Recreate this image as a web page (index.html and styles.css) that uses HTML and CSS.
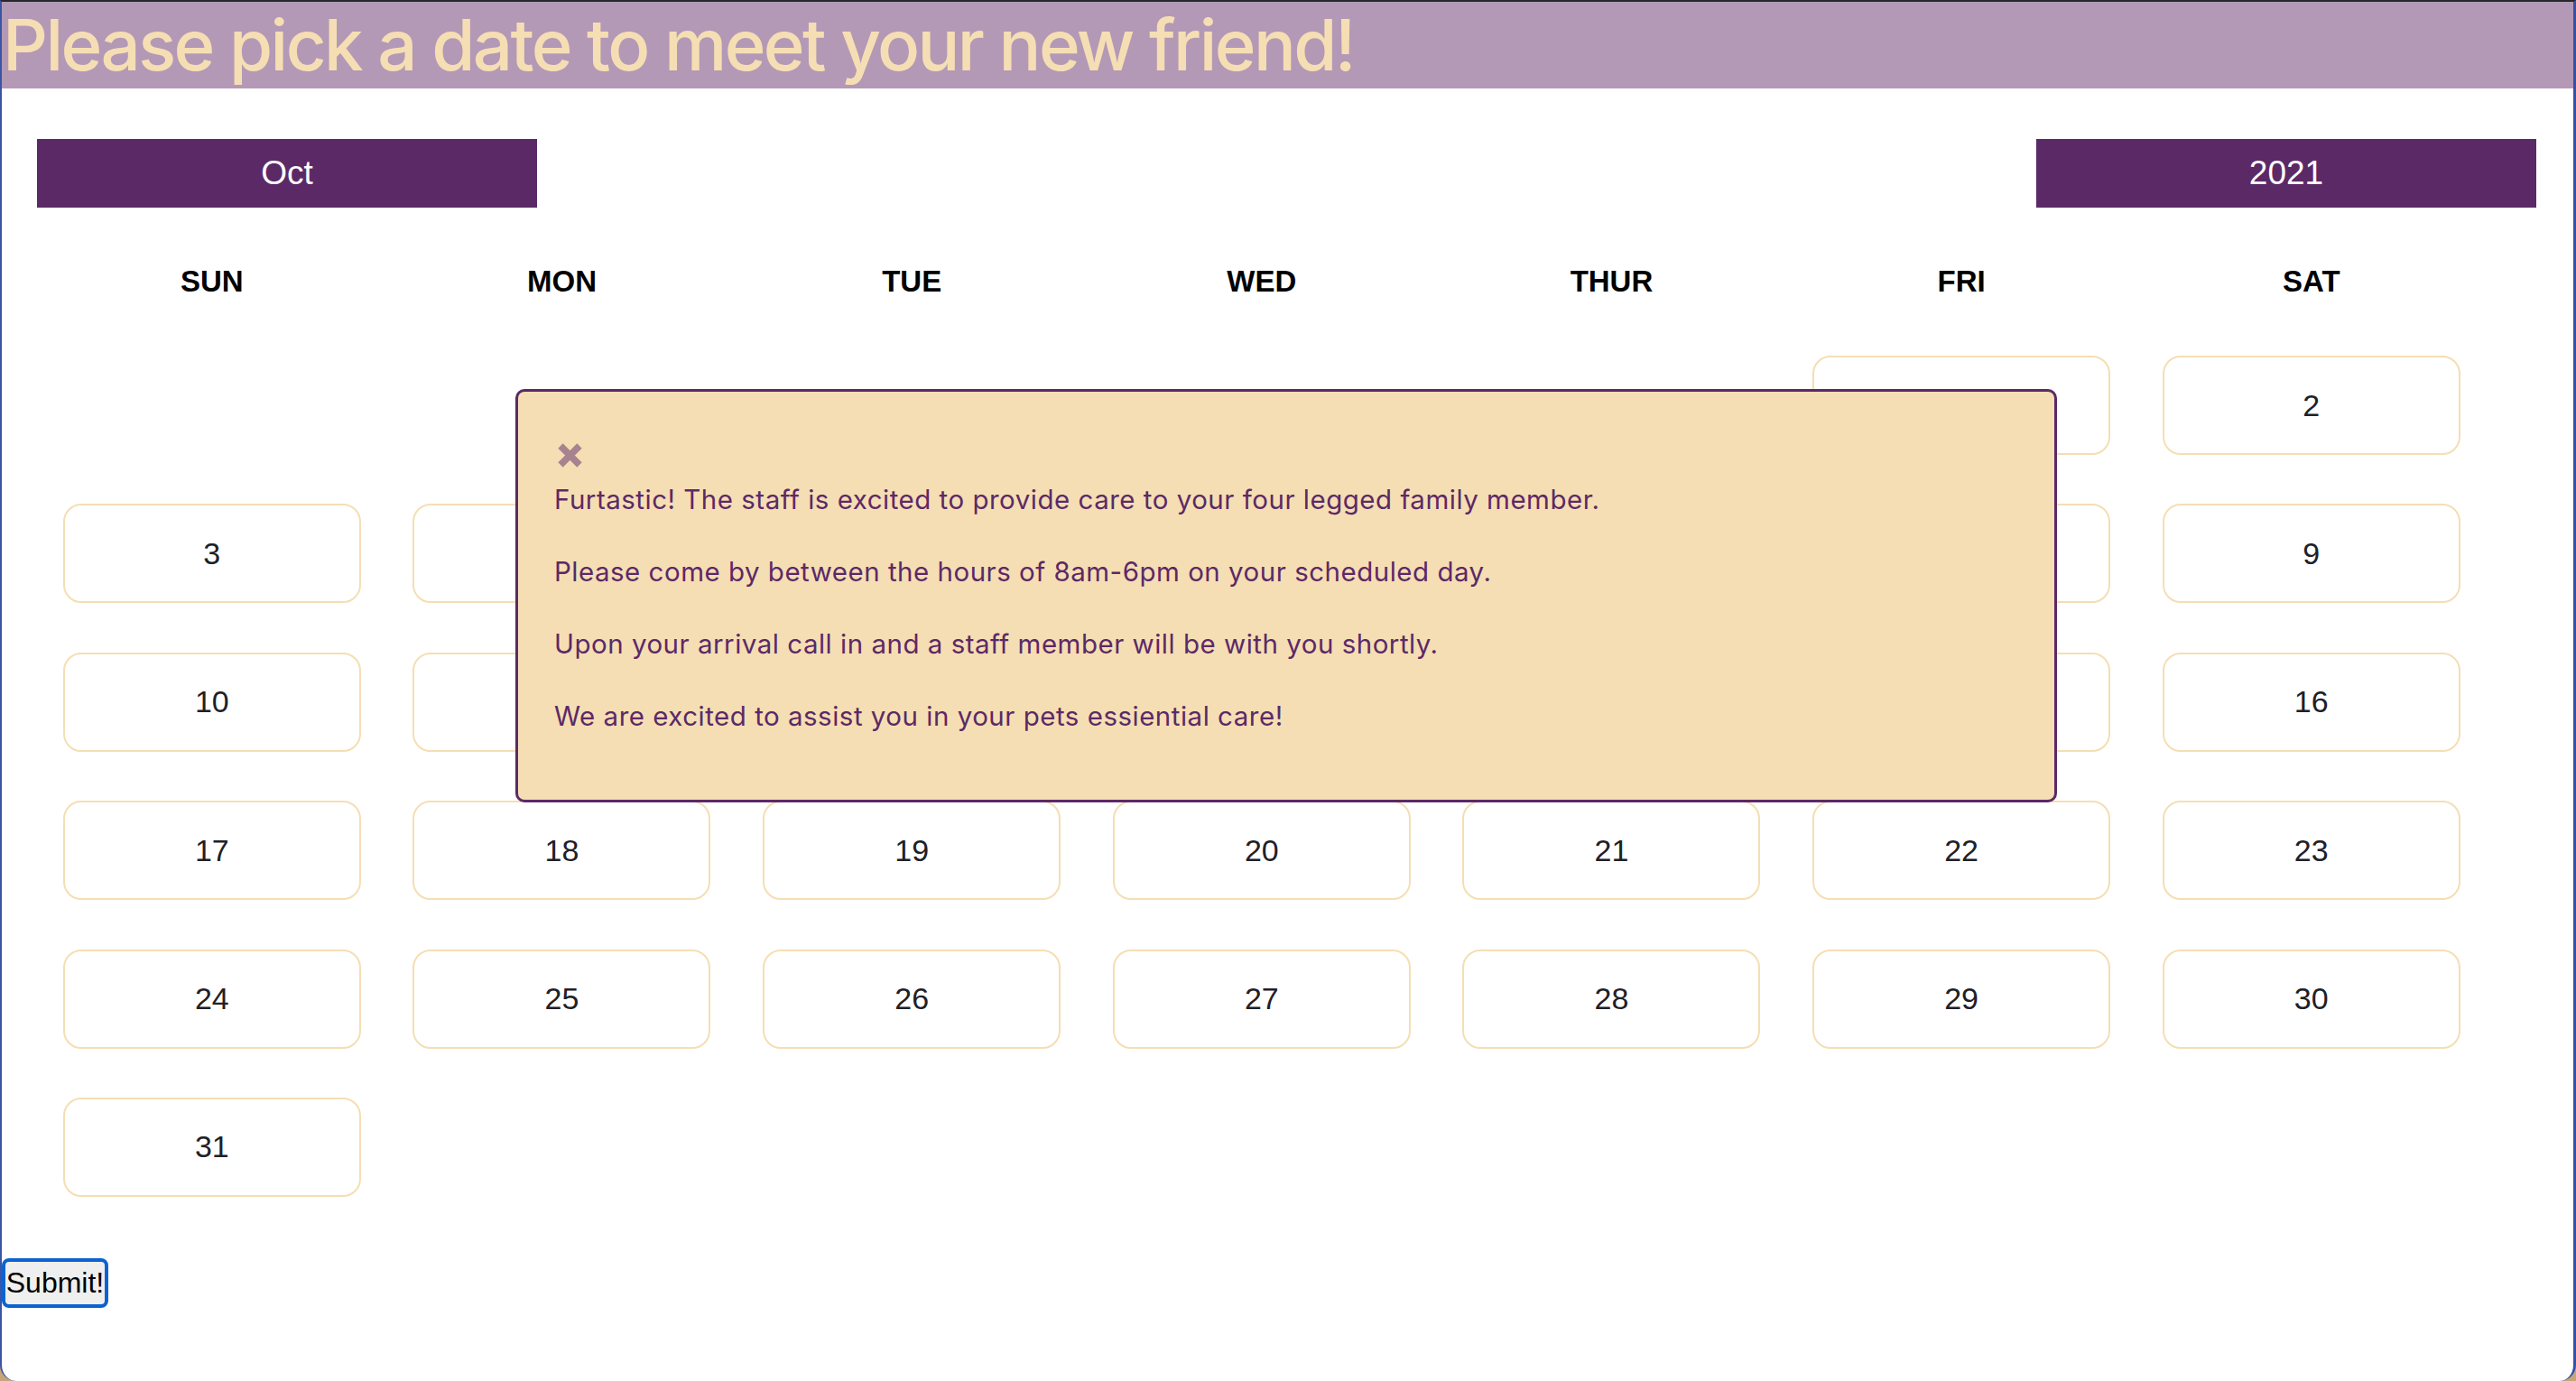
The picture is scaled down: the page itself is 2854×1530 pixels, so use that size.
FILE: index.html
```html
<!DOCTYPE html>
<html lang="en">
<head>
<meta charset="utf-8">
<title>Pick a date</title>
<link rel="stylesheet" href="styles.css">
</head>
<body>
<h1 class="title">Please pick a date to meet your new friend!</h1>
<div class="selectors">
  <div class="selector">Oct</div>
  <div class="selector">2021</div>
</div>
<div class="weekdays">
  <div>SUN</div><div>MON</div><div>TUE</div><div>WED</div><div>THUR</div><div>FRI</div><div>SAT</div>
</div>
<div class="days">
  <div class="blank"></div><div class="blank"></div><div class="blank"></div><div class="blank"></div><div class="blank"></div>
  <div class="day">1</div><div class="day">2</div>
  <div class="day">3</div><div class="day">4</div><div class="day">5</div><div class="day">6</div><div class="day">7</div><div class="day">8</div><div class="day">9</div>
  <div class="day">10</div><div class="day">11</div><div class="day">12</div><div class="day">13</div><div class="day">14</div><div class="day">15</div><div class="day">16</div>
  <div class="day">17</div><div class="day">18</div><div class="day">19</div><div class="day">20</div><div class="day">21</div><div class="day">22</div><div class="day">23</div>
  <div class="day">24</div><div class="day">25</div><div class="day">26</div><div class="day">27</div><div class="day">28</div><div class="day">29</div><div class="day">30</div>
  <div class="day">31</div>
</div>
<button class="submit" type="button">Submit!</button>

<div class="modal">
  <svg class="close" width="29" height="29" viewBox="0 0 29 29" aria-hidden="true">
    <path d="M4 4 L25 25 M25 4 L4 25" stroke="#a7828f" stroke-width="7.5" stroke-linecap="butt"/>
  </svg>
  <p>Furtastic! The staff is excited to provide care to your four legged family member.</p>
  <p>Please come by between the hours of 8am-6pm on your scheduled day.</p>
  <p>Upon your arrival call in and a staff member will be with you shortly.</p>
  <p>We are excited to assist you in your pets essiential care!</p>
</div>
</body>
</html>
```

FILE: styles.css
```css
html {
  margin: 0;
  height: 100%;
  background: #c6a678;
}

body {
  margin: 0;
  box-sizing: border-box;
  min-height: 1530px;
  background: #ffffff;
  border-top: 2px solid #27262b;
  border-left: 2px solid #3a55a5;
  border-right: 3px solid #3450a8;
  border-radius: 0 0 18px 18px;
  position: relative;
  font-family: "Liberation Sans", Arial, sans-serif;
}

.title {
  margin: 0;
  height: 96px;
  background: #b399b6;
  color: #f5deb3;
  font-family: Inter, "Noto Sans", sans-serif;
  font-size: 78px;
  font-weight: 500;
  line-height: 96px;
  letter-spacing: -2.6px;
  white-space: nowrap;
  padding-left: 1px;
}

.selectors {
  display: flex;
  justify-content: space-between;
  margin-top: 56px;
  padding: 0 41px 0 39px;
}

.selector {
  width: 554px;
  height: 76px;
  background: #5c2967;
  color: #ffffff;
  font-size: 37px;
  line-height: 76px;
  text-align: center;
}

.weekdays,
.days {
  display: grid;
  grid-template-columns: repeat(7, 387.67px);
  margin-left: 39px;
}

.weekdays {
  height: 164px;
  align-items: center;
  justify-items: center;
  font-size: 33px;
  font-weight: 700;
  color: #000000;
}

.days {
  grid-auto-rows: 110px;
  row-gap: 54.4px;
  justify-items: center;
}

.day {
  box-sizing: border-box;
  width: 330px;
  height: 110px;
  border: 2px solid #f5deb3;
  border-radius: 20px;
  background: #ffffff;
  color: #1e2127;
  font-size: 34px;
  display: flex;
  align-items: center;
  justify-content: center;
}

.submit {
  display: block;
  margin: 68px 0 0 0;
  box-sizing: border-box;
  width: 118px;
  height: 55px;
  padding: 0;
  background: #efefef;
  border: 4px solid #0a63d0;
  border-radius: 8px;
  font-family: "Liberation Sans", Arial, sans-serif;
  font-size: 32px;
  color: #000000;
}

.modal {
  position: absolute;
  left: 569px;
  top: 429px;
  width: 1708px;
  height: 458px;
  box-sizing: border-box;
  background: #f5deb3;
  border: 3px solid #5c2967;
  border-radius: 10px;
  padding: 56px 40px 0 40px;
  font-family: Inter, "Noto Sans", sans-serif;
  color: #5c2967;
}

.close {
  display: block;
  margin: 0 0 14px 3px;
}

.modal p {
  margin: 0 0 40px 0;
  font-size: 29.5px;
  line-height: 40px;
  letter-spacing: 0.5px;
}
```
